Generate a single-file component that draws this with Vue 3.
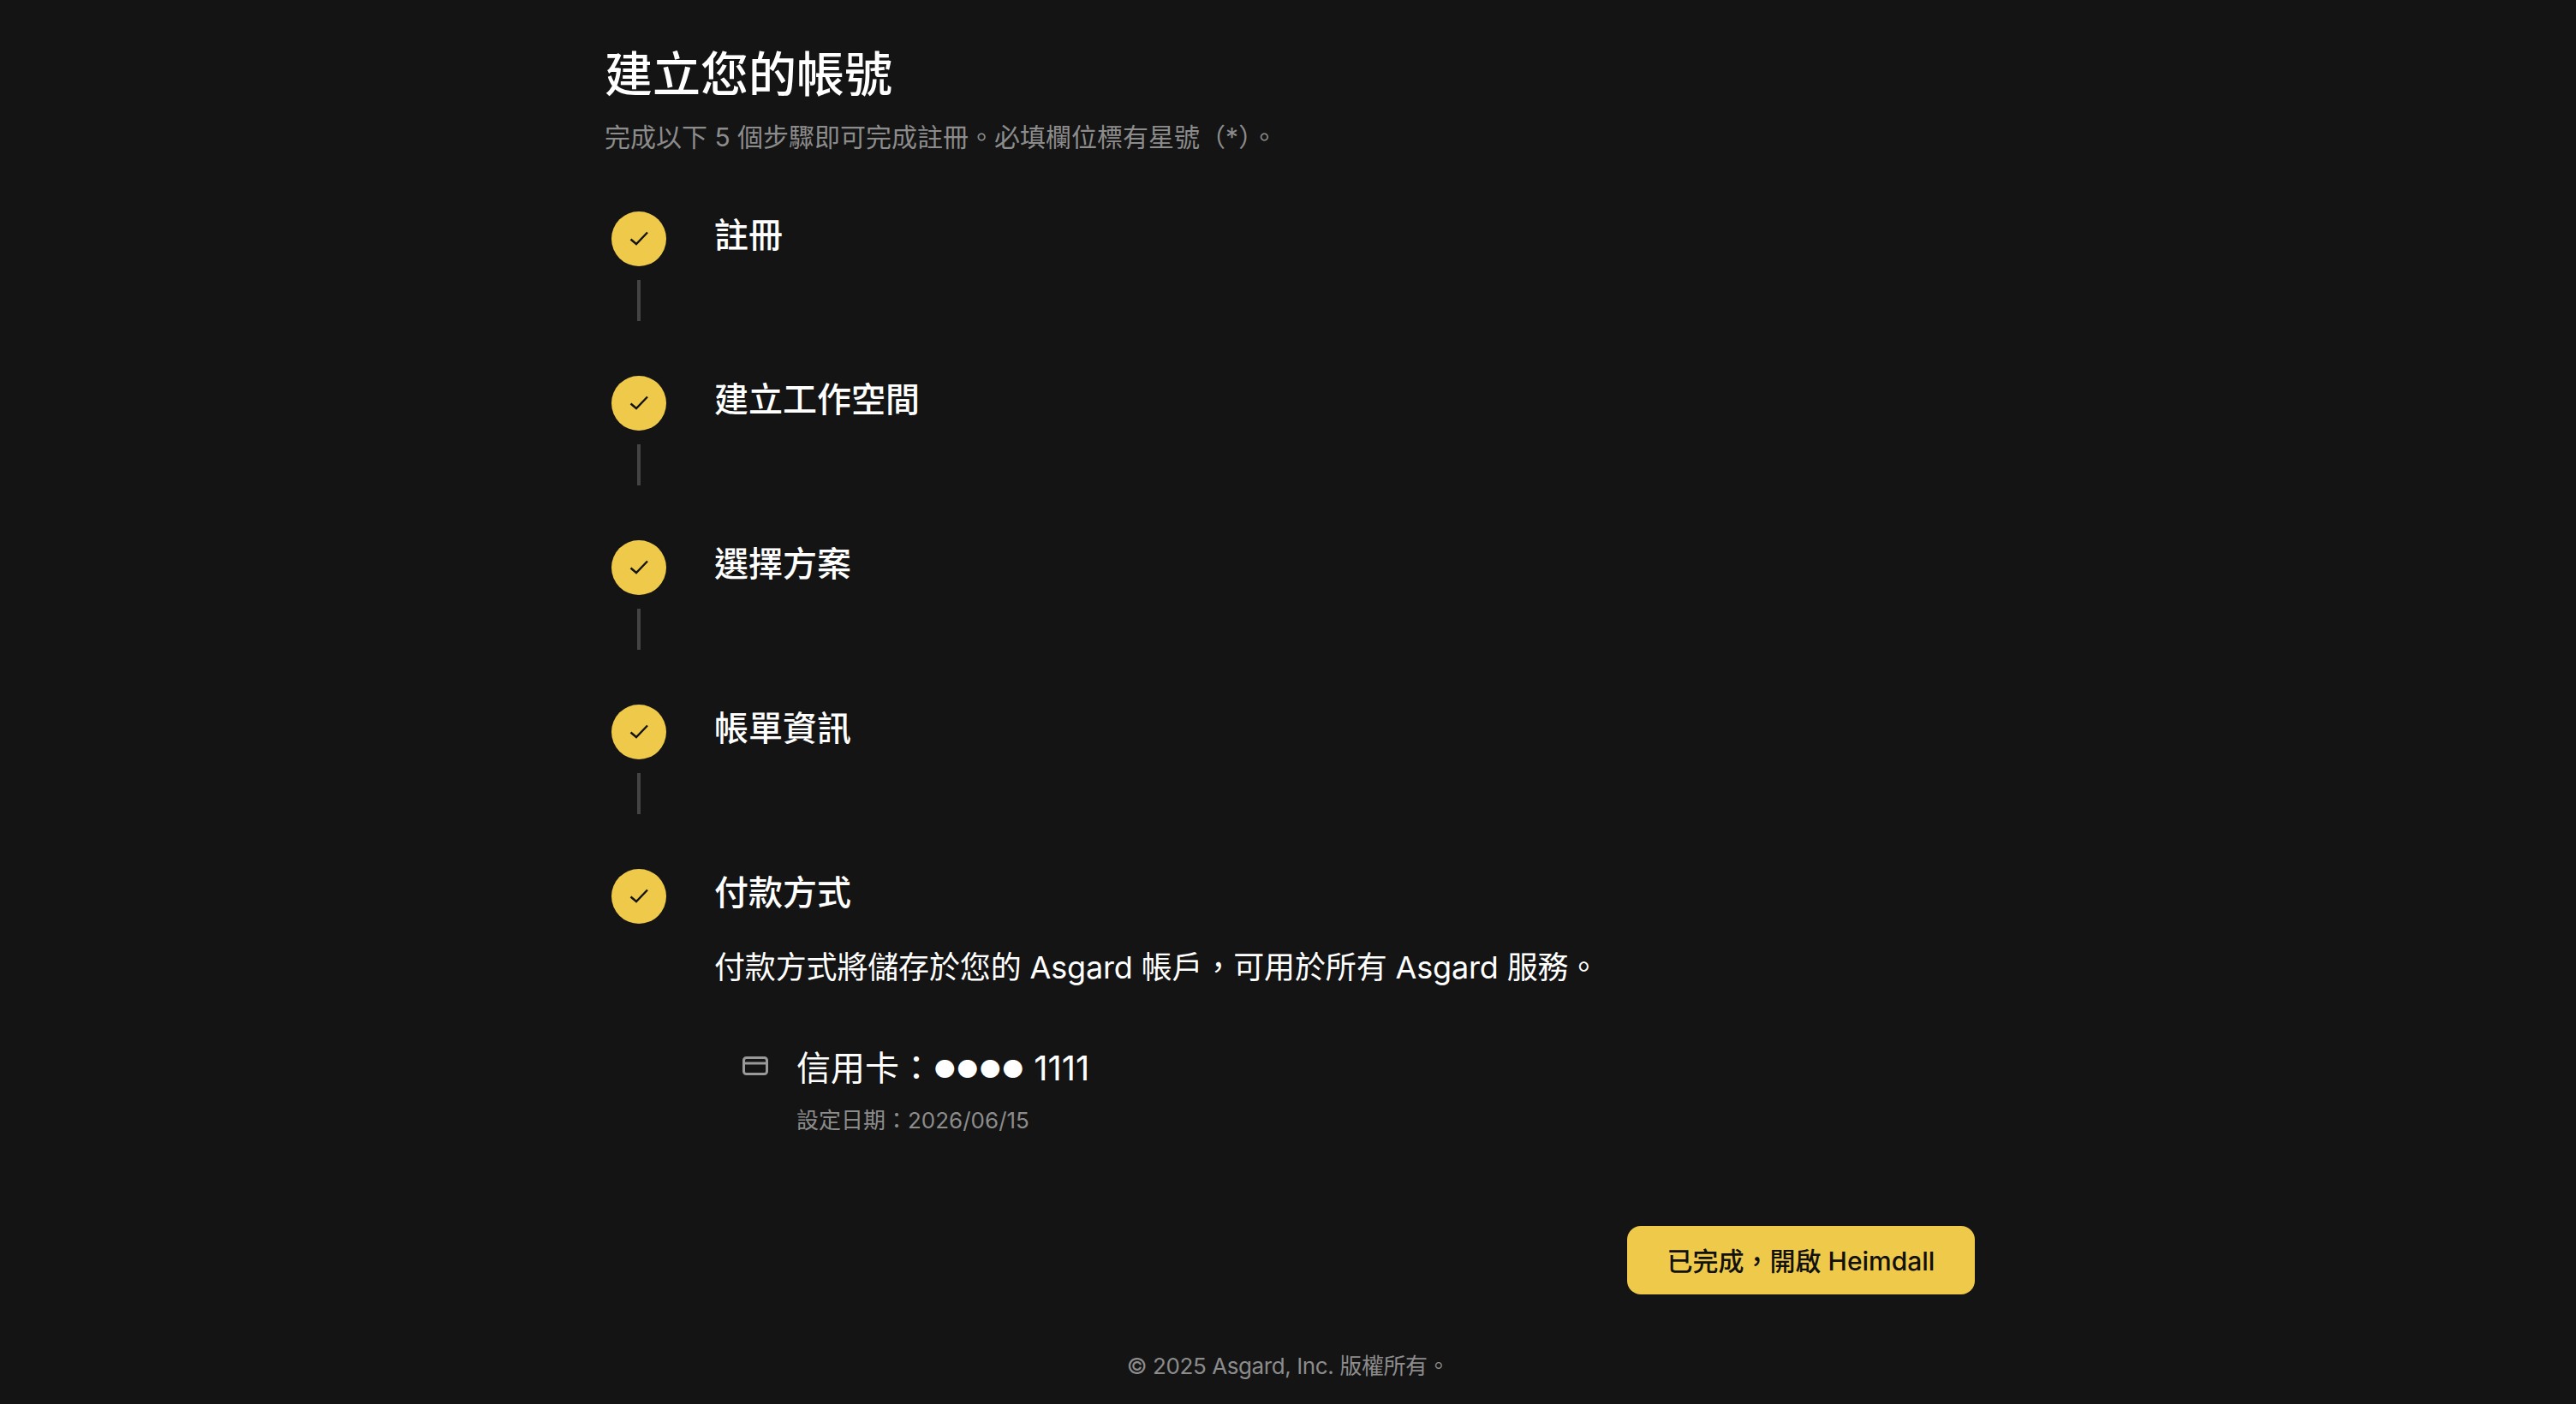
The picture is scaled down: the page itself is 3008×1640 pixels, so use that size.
<template>
  <div class="page">
    <main class="wrap">
      <h1 class="title">建立您的帳號</h1>
      <p class="sub">完成以下 5 個步驟即可完成註冊。必填欄位標有星號（*）。</p>

      <div class="steps">
        <section v-for="(s, i) in steps" :key="s" class="step">
          <div class="rail">
            <div class="dot">
              <svg width="24" height="24" viewBox="0 0 24 24" fill="none">
                <path d="M2.5 12.5 L9 18 L22 4.5" stroke="#141414" stroke-width="2.4" />
              </svg>
            </div>
            <div v-if="i < steps.length - 1" class="line"></div>
          </div>
          <div class="body">
            <h2 class="name">{{ s }}</h2>
            <template v-if="i === steps.length - 1">
              <p class="desc">付款方式將儲存於您的 Asgard 帳戶，可用於所有 Asgard 服務。</p>
              <div class="card">
                <svg class="card-icon" width="30" height="22" viewBox="0 0 30 22" fill="none">
                  <rect x="1.5" y="1.5" width="27" height="19" rx="3" stroke="#999" stroke-width="3" />
                  <path d="M1.5 8 H28.5" stroke="#999" stroke-width="3" />
                </svg>
                <div>
                  <div class="card-name">信用卡：<span class="mask">●●●●</span> 1111</div>
                  <div class="card-date">設定日期：2026/06/15</div>
                </div>
              </div>
            </template>
          </div>
        </section>
      </div>

      <div class="actions">
        <button class="done">已完成，開啟 Heimdall</button>
      </div>
    </main>
    <footer class="foot">© 2025 Asgard, Inc. 版權所有。</footer>
  </div>
</template>

<script setup>
const steps = ["註冊", "建立工作空間", "選擇方案", "帳單資訊", "付款方式"];
</script>

<style>
html, body { background: #141414; }
</style>

<style scoped>
.page {
  height: 1640px;
  overflow: hidden;
  background: #141414;
  color: #fff;
  font-family: "Inter", "Noto Sans CJK TC", sans-serif;
  padding-top: 51px;
  box-sizing: border-box;
}
.wrap { width: 1600px; margin: 0 0 0 706px; }
.title { margin: 0; font-size: 56px; line-height: 72px; font-weight: 500; }
.sub { margin: 15px 0 0; font-size: 30px; line-height: 44px; color: #8c8c8c; }
.steps { margin-top: 65px; }
.step { display: flex; gap: 56px; margin-bottom: 64px; }
.step:last-child { margin-bottom: 0; }
.rail { width: 64px; margin-left: 8px; display: flex; flex-direction: column; align-items: center; gap: 16px; }
.dot { width: 64px; height: 64px; border-radius: 50%; background: #efc94a; display: flex; align-items: center; justify-content: center; }
.line { width: 4px; height: 48px; background: #444; }
.name { margin: 0; font-size: 40px; line-height: 56px; font-weight: 500; }
.desc { margin: 33px 0 0; font-size: 36px; line-height: 52px; letter-spacing: -0.15px; }
.card { display: flex; gap: 33px; margin: 64px 0 0 33px; }
.card-icon { margin-top: 14px; flex: none; }
.card-name { font-size: 40px; line-height: 56px; }
.mask { font-size: 29px; vertical-align: 3px; }
.card-date { margin-top: 12px; font-size: 26px; line-height: 40px; color: #8c8c8c; }
.actions { display: flex; justify-content: flex-end; margin-top: 103px; }
.done {
  display: flex;
  align-items: center;
  justify-content: center;
  height: 80px;
  width: 406px;
  padding: 0 0 3px;
  border: 0;
  border-radius: 16px;
  background: #efc94a;
  color: #111;
  font: 500 30px "Inter", "Noto Sans CJK TC", sans-serif;
}
.foot { margin-top: 64px; text-align: center; font-size: 26px; line-height: 40px; letter-spacing: -0.4px; color: #8c8c8c; }
</style>
